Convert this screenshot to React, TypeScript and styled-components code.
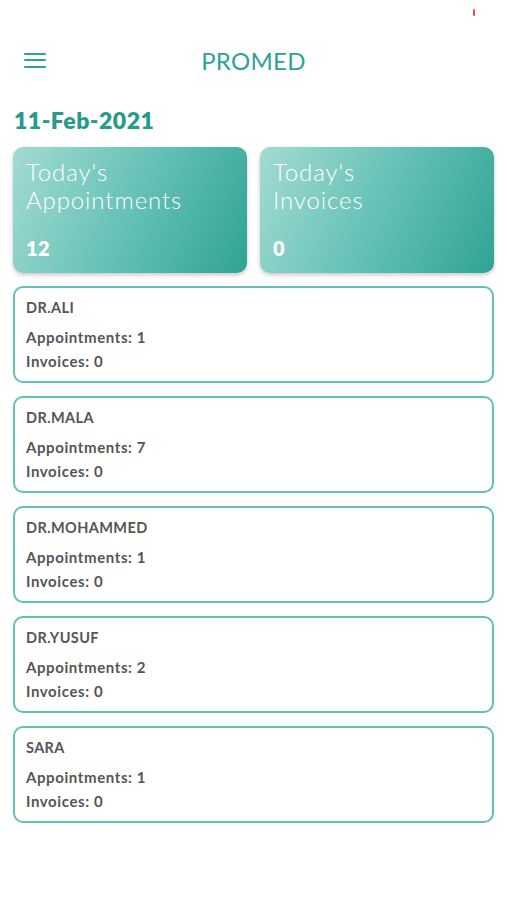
import styled, { createGlobalStyle } from "styled-components";

const GlobalStyle = createGlobalStyle`
  body {
    margin: 0;
    background: #ffffff;
    font-family: "Lato", "Open Sans", sans-serif;
  }
`;

const Page = styled.div`
  display: flex;
  flex-direction: column;
  inline-size: 507px;
  min-block-size: 900px;
  box-sizing: border-box;
`;

const StatusBar = styled.div`
  display: flex;
  justify-content: flex-end;
  align-items: flex-start;
  block-size: 40px;
  padding: 9px 32px 0 0;
  box-sizing: border-box;
`;

const Signal = styled.span`
  display: block;
  inline-size: 2px;
  block-size: 7px;
  border-radius: 1px;
  background: #ec4d4d;
`;

const Header = styled.header`
  display: grid;
  grid-template-columns: 1fr auto 1fr;
  align-items: center;
  block-size: 40px;
  padding: 0 24px;
`;

const MenuButton = styled.button`
  display: flex;
  flex-direction: column;
  justify-content: space-between;
  inline-size: 22px;
  block-size: 15px;
  padding: 0;
  border: 0;
  background: none;
  cursor: pointer;
`;

const MenuLine = styled.span`
  display: block;
  block-size: 2px;
  border-radius: 1px;
  background: #2ea395;
`;

const Title = styled.h1`
  margin: 0;
  font-size: 24px;
  font-weight: 400;
  letter-spacing: 0.3px;
  color: #2ea395;
`;

const DateHeading = styled.h2`
  margin: 26px 0 0;
  padding: 0 14px;
  font-size: 23px;
  font-weight: 800;
  line-height: 28px;
  letter-spacing: 0.5px;
  color: #279a8b;
`;

const Summary = styled.section`
  display: grid;
  grid-template-columns: 1fr 1fr;
  gap: 13px;
  margin: 13px 13px 0;
`;

const SummaryCard = styled.div`
  display: flex;
  flex-direction: column;
  justify-content: space-between;
  block-size: 126px;
  padding: 11px 13px 14px;
  box-sizing: border-box;
  border-radius: 10px;
  background: linear-gradient(115deg, #a3dbd3 0%, #6cc4b9 45%, #2fa494 100%);
  box-shadow: 0 2px 4px rgba(0, 0, 0, 0.22);
  color: #ffffff;
`;

const SummaryLabel = styled.div`
  font-size: 24px;
  font-weight: 300;
  line-height: 28px;
  letter-spacing: 0.9px;
`;

const SummaryValue = styled.div`
  font-size: 20px;
  font-weight: 800;
  line-height: 22px;
  letter-spacing: 0.5px;
`;

const DoctorList = styled.section`
  display: flex;
  flex-direction: column;
  gap: 13px;
  margin: 13px 13px 0;
`;

const DoctorCard = styled.div`
  display: flex;
  flex-direction: column;
  block-size: 97px;
  padding: 11px 11px 0;
  box-sizing: border-box;
  border: 2px solid #62c0b4;
  border-radius: 10px;
  color: #555555;
`;

const DoctorName = styled.div`
  font-size: 14.5px;
  font-weight: 700;
  line-height: 18px;
  letter-spacing: 0.4px;
  margin-block-end: 8px;
`;

const StatLine = styled.div`
  font-size: 15px;
  font-weight: 700;
  line-height: 24px;
  letter-spacing: 0.6px;
`;

const doctors = [
  { name: "DR.ALI", appointments: 1, invoices: 0 },
  { name: "DR.MALA", appointments: 7, invoices: 0 },
  { name: "DR.MOHAMMED", appointments: 1, invoices: 0 },
  { name: "DR.YUSUF", appointments: 2, invoices: 0 },
  { name: "SARA", appointments: 1, invoices: 0 },
];

export default function App() {
  return (
    <Page>
      <GlobalStyle />
      <StatusBar>
        <Signal />
      </StatusBar>
      <Header>
        <MenuButton aria-label="Menu">
          <MenuLine />
          <MenuLine />
          <MenuLine />
        </MenuButton>
        <Title>PROMED</Title>
        <span />
      </Header>
      <DateHeading>11-Feb-2021</DateHeading>
      <Summary>
        <SummaryCard>
          <SummaryLabel>
            Today's
            <br />
            Appointments
          </SummaryLabel>
          <SummaryValue>12</SummaryValue>
        </SummaryCard>
        <SummaryCard>
          <SummaryLabel>
            Today's
            <br />
            Invoices
          </SummaryLabel>
          <SummaryValue>0</SummaryValue>
        </SummaryCard>
      </Summary>
      <DoctorList>
        {doctors.map((d) => (
          <DoctorCard key={d.name}>
            <DoctorName>{d.name}</DoctorName>
            <StatLine>Appointments: {d.appointments}</StatLine>
            <StatLine>Invoices: {d.invoices}</StatLine>
          </DoctorCard>
        ))}
      </DoctorList>
    </Page>
  );
}
